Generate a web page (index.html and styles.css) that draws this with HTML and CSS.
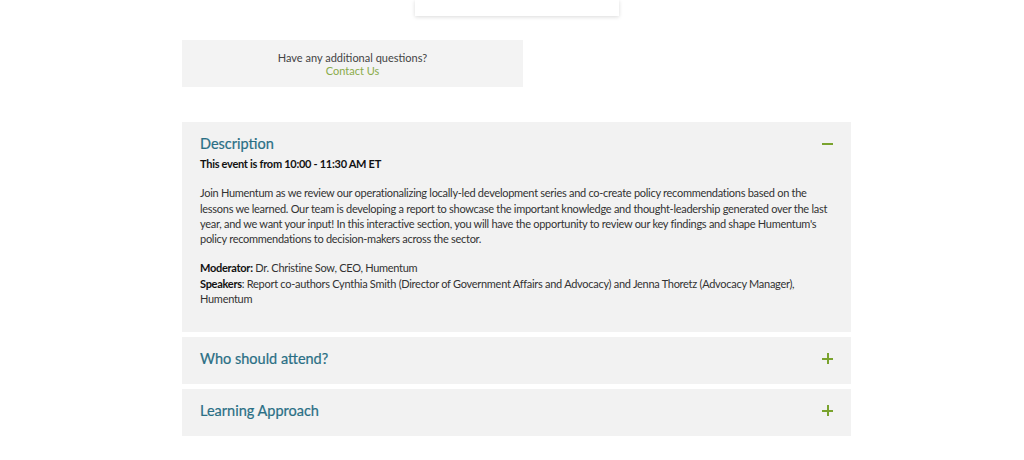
FILE: index.html
```html
<!DOCTYPE html>
<html lang="en">

<head>
    <meta charset="UTF-8">
    <meta name="viewport" content="width=device-width, initial-scale=1.0">
    <title>Event Details</title>
    <link rel="stylesheet" href="styles.css">
</head>

<body>
    <div class="page">
        <div class="top-card-row">
            <div class="top-card"></div>
        </div>

        <div class="questions">
            <p>Have any additional questions?</p>
            <a href="#">Contact Us</a>
        </div>

        <section class="accordion">
            <div class="panel open">
                <div class="panel-head">
                    <h3>Description</h3>
                    <span class="toggle minus"></span>
                </div>
                <div class="panel-body">
                    <p class="time"><strong>This event is from 10:00 - 11:30 AM ET</strong></p>
                    <p>Join Humentum as we review our operationalizing locally-led development series and co-create policy recommendations based on the lessons we learned. Our team is developing a report to showcase the important knowledge and thought-leadership generated over the last year, and we want your input! In this interactive section, you will have the opportunity to review our key findings and shape Humentum's policy recommendations to decision-makers across the sector.</p>
                    <p class="people">
                        <span class="line"><strong>Moderator:</strong> Dr. Christine Sow, CEO, Humentum</span>
                        <span class="line"><strong>Speakers</strong>: Report co-authors Cynthia Smith (Director of Government Affairs and Advocacy) and Jenna Thoretz (Advocacy Manager), Humentum</span>
                    </p>
                </div>
            </div>
            <div class="panel">
                <div class="panel-head">
                    <h3>Who should attend?</h3>
                    <span class="toggle plus"></span>
                </div>
            </div>
            <div class="panel">
                <div class="panel-head">
                    <h3>Learning Approach</h3>
                    <span class="toggle plus"></span>
                </div>
            </div>
        </section>
    </div>
</body>

</html>
```

FILE: styles.css
```css
/* 基础样式 */

body {
    margin: 0;
    background-color: #ffffff;
    color: #333;
    font-family: Lato, "Open Sans", sans-serif;
    font-size: 11px;
}

.page {
    width: 669px;
    margin-left: 182px;
}

/* 顶部卡片 */

.top-card-row {
    padding-left: 233px;
}

.top-card {
    width: 204px;
    height: 16px;
    background-color: #fff;
    box-shadow: 0 1px 4px rgba(0, 0, 0, 0.15);
}

/* 问题框 */

.questions {
    width: 341px;
    height: 47px;
    margin-top: 24px;
    background-color: #f3f3f3;
    text-align: center;
    box-sizing: border-box;
    padding-top: 11px;
    line-height: 13px;
    color: #444;
}

.questions p {
    margin: 0;
}

.questions a {
    color: #8aab4a;
    text-decoration: none;
}

/* 手风琴样式 */

.accordion {
    margin-top: 35px;
    display: flex;
    flex-direction: column;
    gap: 5px;
}

.panel {
    background-color: #f2f2f2;
    padding: 0 18px;
}

.panel-head {
    display: flex;
    justify-content: space-between;
    align-items: center;
    box-sizing: border-box;
    height: 47px;
    padding-bottom: 5px;
}

.panel.open .panel-head {
    height: 42px;
    padding-bottom: 0;
}

.panel-head h3 {
    margin: 0;
    font-size: 14.5px;
    font-weight: 400;
    color: #2a6f85;
    -webkit-text-stroke: 0.2px #2a6f85;
}

.toggle {
    position: relative;
    width: 11px;
    height: 11px;
}

.toggle::before,
.toggle::after {
    content: "";
    position: absolute;
    background-color: #7aa32e;
}

.toggle::before {
    left: 0;
    top: 5px;
    width: 11px;
    height: 2px;
}

.toggle.plus::after {
    left: 5px;
    top: 0;
    width: 2px;
    height: 11px;
}

.panel-body {
    margin-top: -8px;
    margin-right: -8px;
    padding-bottom: 26px;
    line-height: 15.3px;
    letter-spacing: -0.28px;
    color: #333;
}

.panel-body p {
    margin: 0 0 14px 0;
}

.panel-body p:last-child {
    margin-bottom: 0;
}

.panel-body .line {
    display: block;
}

.panel-body strong {
    color: #111;
    font-weight: 700;
}
```
